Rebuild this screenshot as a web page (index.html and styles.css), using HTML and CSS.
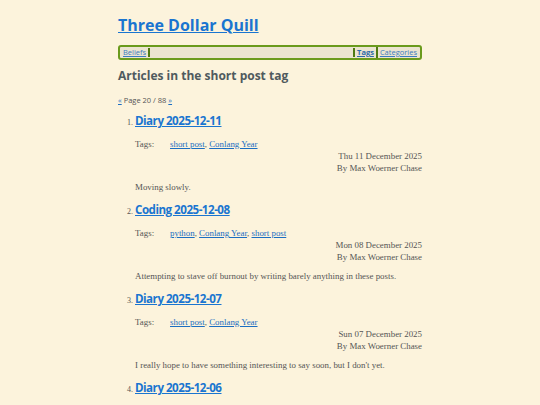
FILE: index.html
```html
<!DOCTYPE html>
<html>
<head>
<meta charset="utf-8">
<link rel="stylesheet" href="styles.css">
</head>
<body>
<div class="page">
  <header class="site-header">
    <h1 class="site-title"><a href="#">Three Dollar Quill</a></h1>
    <nav class="nav">
      <a href="#" class="nav-link">Beliefs</a>
      <span class="nav-fill"></span>
      <a href="#" class="nav-link current">Tags</a>
      <a href="#" class="nav-link">Categories</a>
    </nav>
  </header>
  <main>
    <h2 class="page-heading">Articles in the short post tag</h2>
    <p class="pager"><a href="#">«</a> Page 20 / 88 <a href="#">»</a></p>
    <ol class="articles" start="1">
      <li class="article">
        <h3 class="article-title"><a href="#">Diary 2025-12-11</a></h3>
        <div class="tags"><span class="tags-label">Tags:</span><span><a href="#">short post</a>, <a href="#">Conlang Year</a></span></div>
        <div class="meta"><div>Thu 11 December 2025</div><div>By Max Woerner Chase</div></div>
        <p class="summary">Moving slowly.</p>
      </li>
      <li class="article">
        <h3 class="article-title"><a href="#">Coding 2025-12-08</a></h3>
        <div class="tags"><span class="tags-label">Tags:</span><span><a href="#">python</a>, <a href="#">Conlang Year</a>, <a href="#">short post</a></span></div>
        <div class="meta"><div>Mon 08 December 2025</div><div>By Max Woerner Chase</div></div>
        <p class="summary">Attempting to stave off burnout by writing barely anything in these posts.</p>
      </li>
      <li class="article">
        <h3 class="article-title"><a href="#">Diary 2025-12-07</a></h3>
        <div class="tags"><span class="tags-label">Tags:</span><span><a href="#">short post</a>, <a href="#">Conlang Year</a></span></div>
        <div class="meta"><div>Sun 07 December 2025</div><div>By Max Woerner Chase</div></div>
        <p class="summary">I really hope to have something interesting to say soon, but I don't yet.</p>
      </li>
      <li class="article">
        <h3 class="article-title"><a href="#">Diary 2025-12-06</a></h3>
      </li>
    </ol>
  </main>
</div>
</body>
</html>
```
FILE: styles.css
```css
html, body {
  margin: 0;
  padding: 0;
  background: #fcf3dc;
}
body {
  font-family: "Liberation Serif", serif;
  color: #555;
  font-size: 8.9px;
}
.page {
  width: 304px;
  margin: 0 auto;
  padding-top: 14px;
}
a { color: #1b6ec2; }
.site-title {
  font-family: "Open Sans", sans-serif;
  font-size: 16px;
  font-weight: 700;
  margin: 0;
  line-height: 22px;
}
.site-title a { color: #1a75d0; }
.nav {
  margin-top: 9px;
  display: flex;
  align-items: center;
  border: 2px solid #6a9a1c;
  border-radius: 3px;
  background: #ebe4d0;
  height: 11px;
  padding: 0 2px;
  font-family: "Open Sans", sans-serif;
  font-size: 7.5px;
}
.nav-link {
  color: #3b7bbf;
  padding: 0 1px;
  line-height: 11px;
}
.nav-fill {
  flex: 1;
  align-self: stretch;
  border-left: 2px solid #4f7a12;
  border-right: 2px solid #4f7a12;
  margin: 1px 1px;
}
.nav-link.current {
  font-weight: 700;
  color: #2c6aa8;
  border-right: 2px solid #4f7a12;
  padding-right: 2px;
  margin-right: 1px;
}
.page-heading {
  font-family: "Open Sans", sans-serif;
  font-size: 12px;
  font-weight: 700;
  color: #4f5a5e;
  margin: 7px 0 0;
  line-height: 18px;
}
.pager {
  font-family: "Open Sans", sans-serif;
  font-size: 7.5px;
  margin: 10px 0 0;
  line-height: 10px;
}
.articles {
  margin: 8px 0 0;
  padding-left: 17px;
}
.article {
  margin-bottom: 9px;
}
.article::marker {
  font-family: "Liberation Serif", serif;
  font-size: 8px;
  color: #555;
}
.article-title {
  font-family: "Open Sans", sans-serif;
  font-size: 11.6px;
  letter-spacing: -0.5px;
  font-weight: 700;
  margin: 0;
  line-height: 16px;
}
.article-title a { color: #1a75d0; }
.tags {
  display: flex;
  margin-top: 9px;
  line-height: 12px;
}
.tags-label { width: 35px; }
.meta {
  text-align: right;
  line-height: 12px;
}
.summary {
  margin: 7px 0 0;
  line-height: 12px;
}
```
